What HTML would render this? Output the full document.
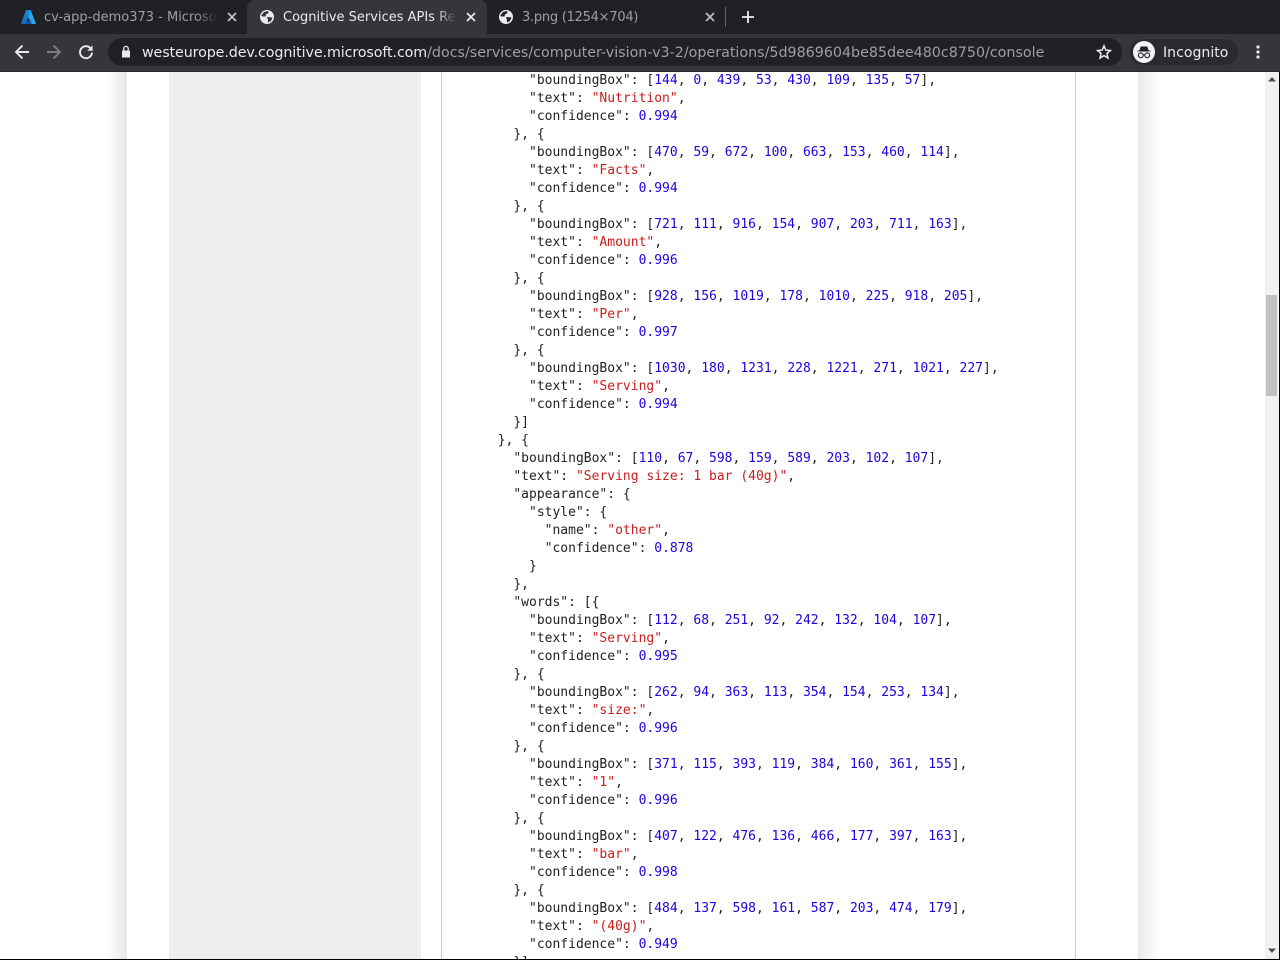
<!DOCTYPE html>
<html><head><meta charset="utf-8"><title>Cognitive Services APIs Reference</title>
<style>
html,body{margin:0;padding:0;background:#fff;overflow:hidden}
body{width:1280px;height:960px;position:relative;font-family:"DejaVu Sans","Liberation Sans",sans-serif}
.abs{position:absolute}
#tabs{left:0;top:0;width:1280px;height:34px;background:#202124}
#bar{left:0;top:34px;width:1280px;height:37px;background:#35363a}
#line{left:0;top:71px;width:1280px;height:1px;background:#27282b}
.tab{position:absolute;top:1px;height:33px;font-size:13px;line-height:33px;white-space:nowrap;overflow:hidden}
#active{left:247px;top:0;width:240px;height:34px;background:#35363a;border-radius:8px 8px 0 0}
#omni{left:108px;top:38px;width:1014px;height:28px;background:#202124;border-radius:14px}
#url{left:142px;top:42px;font-size:14.28px;line-height:20px;color:#e8eaed;white-space:nowrap}
#url em{font-style:normal;letter-spacing:-.105px}
#url span{color:#9aa0a6}
#pill{left:1130px;top:39px;width:108px;height:26px;background:#2a2b2e;border-radius:13px}
#inc{left:1163px;top:42px;font-size:14.1px;line-height:20px;color:#e8eaed}
#main{left:0;top:72px;width:1280px;height:887px;overflow:hidden;background:#fff}
#page{left:127px;top:0;width:1011px;height:887px;background:#fff}
#sl{left:107px;top:0;width:20px;height:887px;background:linear-gradient(to right,rgba(230,230,230,0),#e6e6e6)}
#sr{left:1138px;top:0;width:22px;height:887px;background:linear-gradient(to right,#e9e9e9,rgba(233,233,233,0))}
#side{left:169px;top:0;width:252px;height:887px;background:#efefef}
#box{left:441px;top:0;width:633px;height:887px;border-left:1px solid #ccc;border-right:1px solid #ccc}
pre{position:absolute;left:497.7px;top:-2px;margin:0;padding-top:2px;font:13px/18px "DejaVu Sans Mono","Liberation Mono",monospace;color:#222}
b{font-weight:normal;color:#2200dd}
i{font-style:normal;color:#c81e1e}
#sb{left:1265px;top:72px;width:15px;height:888px;background:#f1f1f1}
#thumb{left:1266px;top:295px;width:11px;height:101px;background:#c1c1c1}
#edgeR{left:1279px;top:72px;width:1px;height:888px;background:#000}
#edgeB{left:0;top:959px;width:1280px;height:1px;background:#000}
</style></head><body>
<div class="abs" id="tabs"></div>
<div class="abs" id="bar"></div>
<div class="abs" id="line"></div>
<div class="abs" id="active"></div>

<svg class="abs" style="left:20px;top:9px" width="17" height="16" viewBox="0 0 17 16"><defs><linearGradient id="az" x1="0" y1="1" x2="0.4" y2="0"><stop offset="0" stop-color="#0f6cc4"/><stop offset="1" stop-color="#1488dc"/></linearGradient></defs><path d="M6 1H11L5.6 15H.9Z" fill="url(#az)"/><path d="M10.6 1L16.1 15H7.4L11.2 13.7 8 8Z" fill="#2ea6ea"/><path d="M5.6 15L9.8 9.8 11.8 15Z" fill="#0d5aa8"/></svg>
<div class="tab" style="left:44px;width:174px;color:#9aa0a6">cv-app-demo373 - Microso</div>
<div class="abs" style="left:196px;top:4px;width:22px;height:26px;background:linear-gradient(to right,rgba(32,33,36,0),#202124)"></div>
<svg class="abs" style="left:227px;top:12px" width="10" height="10" viewBox="0 0 10 10"><path d="M1 1L9 9M9 1L1 9" stroke="#bdc1c6" stroke-width="1.7"/></svg>

<svg class="abs" style="left:259px;top:9px" width="16" height="16" viewBox="0 0 16 16"><circle cx="8" cy="8" r="7" fill="#e8eaed"/><path d="M2.2 6.5L5 3 9 2 9.5 4 7 5.5 6.5 7.5 3.5 7.5ZM8 8L13.5 8.5 12 12 9 13.5 9 11Z" fill="#35363a"/></svg>
<div class="tab" style="left:283px;width:173px;color:#e8eaed">Cognitive Services APIs Re</div>
<div class="abs" style="left:436px;top:4px;width:20px;height:26px;background:linear-gradient(to right,rgba(53,54,58,0),#35363a)"></div>
<svg class="abs" style="left:466px;top:12px" width="10" height="10" viewBox="0 0 10 10"><path d="M1 1L9 9M9 1L1 9" stroke="#e8eaed" stroke-width="1.7"/></svg>

<svg class="abs" style="left:498px;top:9px" width="16" height="16" viewBox="0 0 16 16"><circle cx="8" cy="8" r="7" fill="#e8eaed"/><path d="M2.2 6.5L5 3 9 2 9.5 4 7 5.5 6.5 7.5 3.5 7.5ZM8 8L13.5 8.5 12 12 9 13.5 9 11Z" fill="#202124"/></svg>
<div class="tab" style="left:522px;color:#9aa0a6;letter-spacing:-.25px">3.png (1254×704)</div>
<svg class="abs" style="left:705px;top:12px" width="10" height="10" viewBox="0 0 10 10"><path d="M1 1L9 9M9 1L1 9" stroke="#bdc1c6" stroke-width="1.7"/></svg>
<div class="abs" style="left:725px;top:7px;width:1px;height:20px;background:#5f6368"></div>
<svg class="abs" style="left:741px;top:10px" width="14" height="14" viewBox="0 0 14 14"><path d="M7 1V13M1 7H13" stroke="#e8eaed" stroke-width="1.8"/></svg>

<svg class="abs" style="left:14px;top:44px" width="16" height="16" viewBox="0 0 16 16"><path d="M15 8H2.5M8.5 1.6L2 8l6.5 6.4" fill="none" stroke="#e8eaed" stroke-width="1.9"/></svg>
<svg class="abs" style="left:46px;top:44px" width="16" height="16" viewBox="0 0 16 16"><path d="M1 8H13.5M7.5 1.6L14 8l-6.5 6.4" fill="none" stroke="#7a7c80" stroke-width="1.9"/></svg>
<svg class="abs" style="left:78px;top:44px" width="16" height="16" viewBox="0 0 16 16"><path d="M13.2 5.2A6 6 0 1 0 14 8.6" fill="none" stroke="#e8eaed" stroke-width="1.9"/><path d="M14.6 1.4V6.8H9.2Z" fill="#e8eaed"/></svg>

<div class="abs" id="omni"></div>
<svg class="abs" style="left:121px;top:45px" width="10" height="13" viewBox="0 0 10 13"><path d="M1 5.5H9V12.5H1Z" fill="#e8eaed"/><path d="M2.8 5.5V3.6a2.2 2.2 0 0 1 4.4 0V5.5" fill="none" stroke="#e8eaed" stroke-width="1.3"/></svg>
<div class="abs" id="url" style="top:43px"><em>westeurope.dev.cognitive.microsoft.com</em><span>/docs/services/computer-vision-v3-2/operations/5d9869604be85dee480c8750/console</span></div>
<svg class="abs" style="left:1096px;top:44px" width="16" height="16" viewBox="0 0 16 16"><path d="M8 1.8L9.8 6.1 14.4 6.5 10.9 9.5 12 14 8 11.6 4 14 5.1 9.5 1.6 6.5 6.2 6.1Z" fill="none" stroke="#e8eaed" stroke-width="1.5"/></svg>

<div class="abs" id="pill"></div>
<svg class="abs" style="left:1133px;top:41px" width="22" height="22" viewBox="0 0 22 22"><circle cx="11" cy="11" r="11" fill="#f1f3f4"/><path d="M4.5 10.5H17.5V9.5H15.5L14.4 5.5H7.6L6.5 9.5H4.5Z" fill="#202124"/><circle cx="7.8" cy="14.3" r="2.4" fill="none" stroke="#202124" stroke-width="1.1"/><circle cx="14.2" cy="14.3" r="2.4" fill="none" stroke="#202124" stroke-width="1.1"/><path d="M10.2 14H11.8" stroke="#202124" stroke-width="1"/></svg>
<div class="abs" id="inc" style="top:43px">Incognito</div>
<svg class="abs" style="left:1255px;top:45px" width="6" height="15" viewBox="0 0 6 15"><circle cx="3" cy="2" r="1.6" fill="#e8eaed"/><circle cx="3" cy="7" r="1.6" fill="#e8eaed"/><circle cx="3" cy="12" r="1.6" fill="#e8eaed"/></svg>

<div class="abs" id="main">
<div class="abs" id="sl"></div>
<div class="abs" id="sr"></div>
<div class="abs" id="page"></div>
<div class="abs" id="side"></div>
<div class="abs" id="box"></div>
<pre>    "boundingBox": [<b>144</b>, <b>0</b>, <b>439</b>, <b>53</b>, <b>430</b>, <b>109</b>, <b>135</b>, <b>57</b>],
    "text": <i>"Nutrition"</i>,
    "confidence": <b>0.994</b>
  }, {
    "boundingBox": [<b>470</b>, <b>59</b>, <b>672</b>, <b>100</b>, <b>663</b>, <b>153</b>, <b>460</b>, <b>114</b>],
    "text": <i>"Facts"</i>,
    "confidence": <b>0.994</b>
  }, {
    "boundingBox": [<b>721</b>, <b>111</b>, <b>916</b>, <b>154</b>, <b>907</b>, <b>203</b>, <b>711</b>, <b>163</b>],
    "text": <i>"Amount"</i>,
    "confidence": <b>0.996</b>
  }, {
    "boundingBox": [<b>928</b>, <b>156</b>, <b>1019</b>, <b>178</b>, <b>1010</b>, <b>225</b>, <b>918</b>, <b>205</b>],
    "text": <i>"Per"</i>,
    "confidence": <b>0.997</b>
  }, {
    "boundingBox": [<b>1030</b>, <b>180</b>, <b>1231</b>, <b>228</b>, <b>1221</b>, <b>271</b>, <b>1021</b>, <b>227</b>],
    "text": <i>"Serving"</i>,
    "confidence": <b>0.994</b>
  }]
}, {
  "boundingBox": [<b>110</b>, <b>67</b>, <b>598</b>, <b>159</b>, <b>589</b>, <b>203</b>, <b>102</b>, <b>107</b>],
  "text": <i>"Serving size: 1 bar (40g)"</i>,
  "appearance": {
    "style": {
      "name": <i>"other"</i>,
      "confidence": <b>0.878</b>
    }
  },
  "words": [{
    "boundingBox": [<b>112</b>, <b>68</b>, <b>251</b>, <b>92</b>, <b>242</b>, <b>132</b>, <b>104</b>, <b>107</b>],
    "text": <i>"Serving"</i>,
    "confidence": <b>0.995</b>
  }, {
    "boundingBox": [<b>262</b>, <b>94</b>, <b>363</b>, <b>113</b>, <b>354</b>, <b>154</b>, <b>253</b>, <b>134</b>],
    "text": <i>"size:"</i>,
    "confidence": <b>0.996</b>
  }, {
    "boundingBox": [<b>371</b>, <b>115</b>, <b>393</b>, <b>119</b>, <b>384</b>, <b>160</b>, <b>361</b>, <b>155</b>],
    "text": <i>"1"</i>,
    "confidence": <b>0.996</b>
  }, {
    "boundingBox": [<b>407</b>, <b>122</b>, <b>476</b>, <b>136</b>, <b>466</b>, <b>177</b>, <b>397</b>, <b>163</b>],
    "text": <i>"bar"</i>,
    "confidence": <b>0.998</b>
  }, {
    "boundingBox": [<b>484</b>, <b>137</b>, <b>598</b>, <b>161</b>, <b>587</b>, <b>203</b>, <b>474</b>, <b>179</b>],
    "text": <i>"(40g)"</i>,
    "confidence": <b>0.949</b>
  }]</pre>
</div>

<div class="abs" id="sb"></div>
<div class="abs" id="thumb"></div>
<svg class="abs" style="left:1267px;top:76px" width="10" height="6" viewBox="0 0 10 6"><path d="M1 5.5L5 1 9 5.5Z" fill="#505050"/></svg>
<svg class="abs" style="left:1267px;top:948px" width="10" height="6" viewBox="0 0 10 6"><path d="M1 .5L5 5 9 .5Z" fill="#505050"/></svg>
<div class="abs" id="edgeR"></div>
<div class="abs" id="edgeB"></div>
</body></html>
